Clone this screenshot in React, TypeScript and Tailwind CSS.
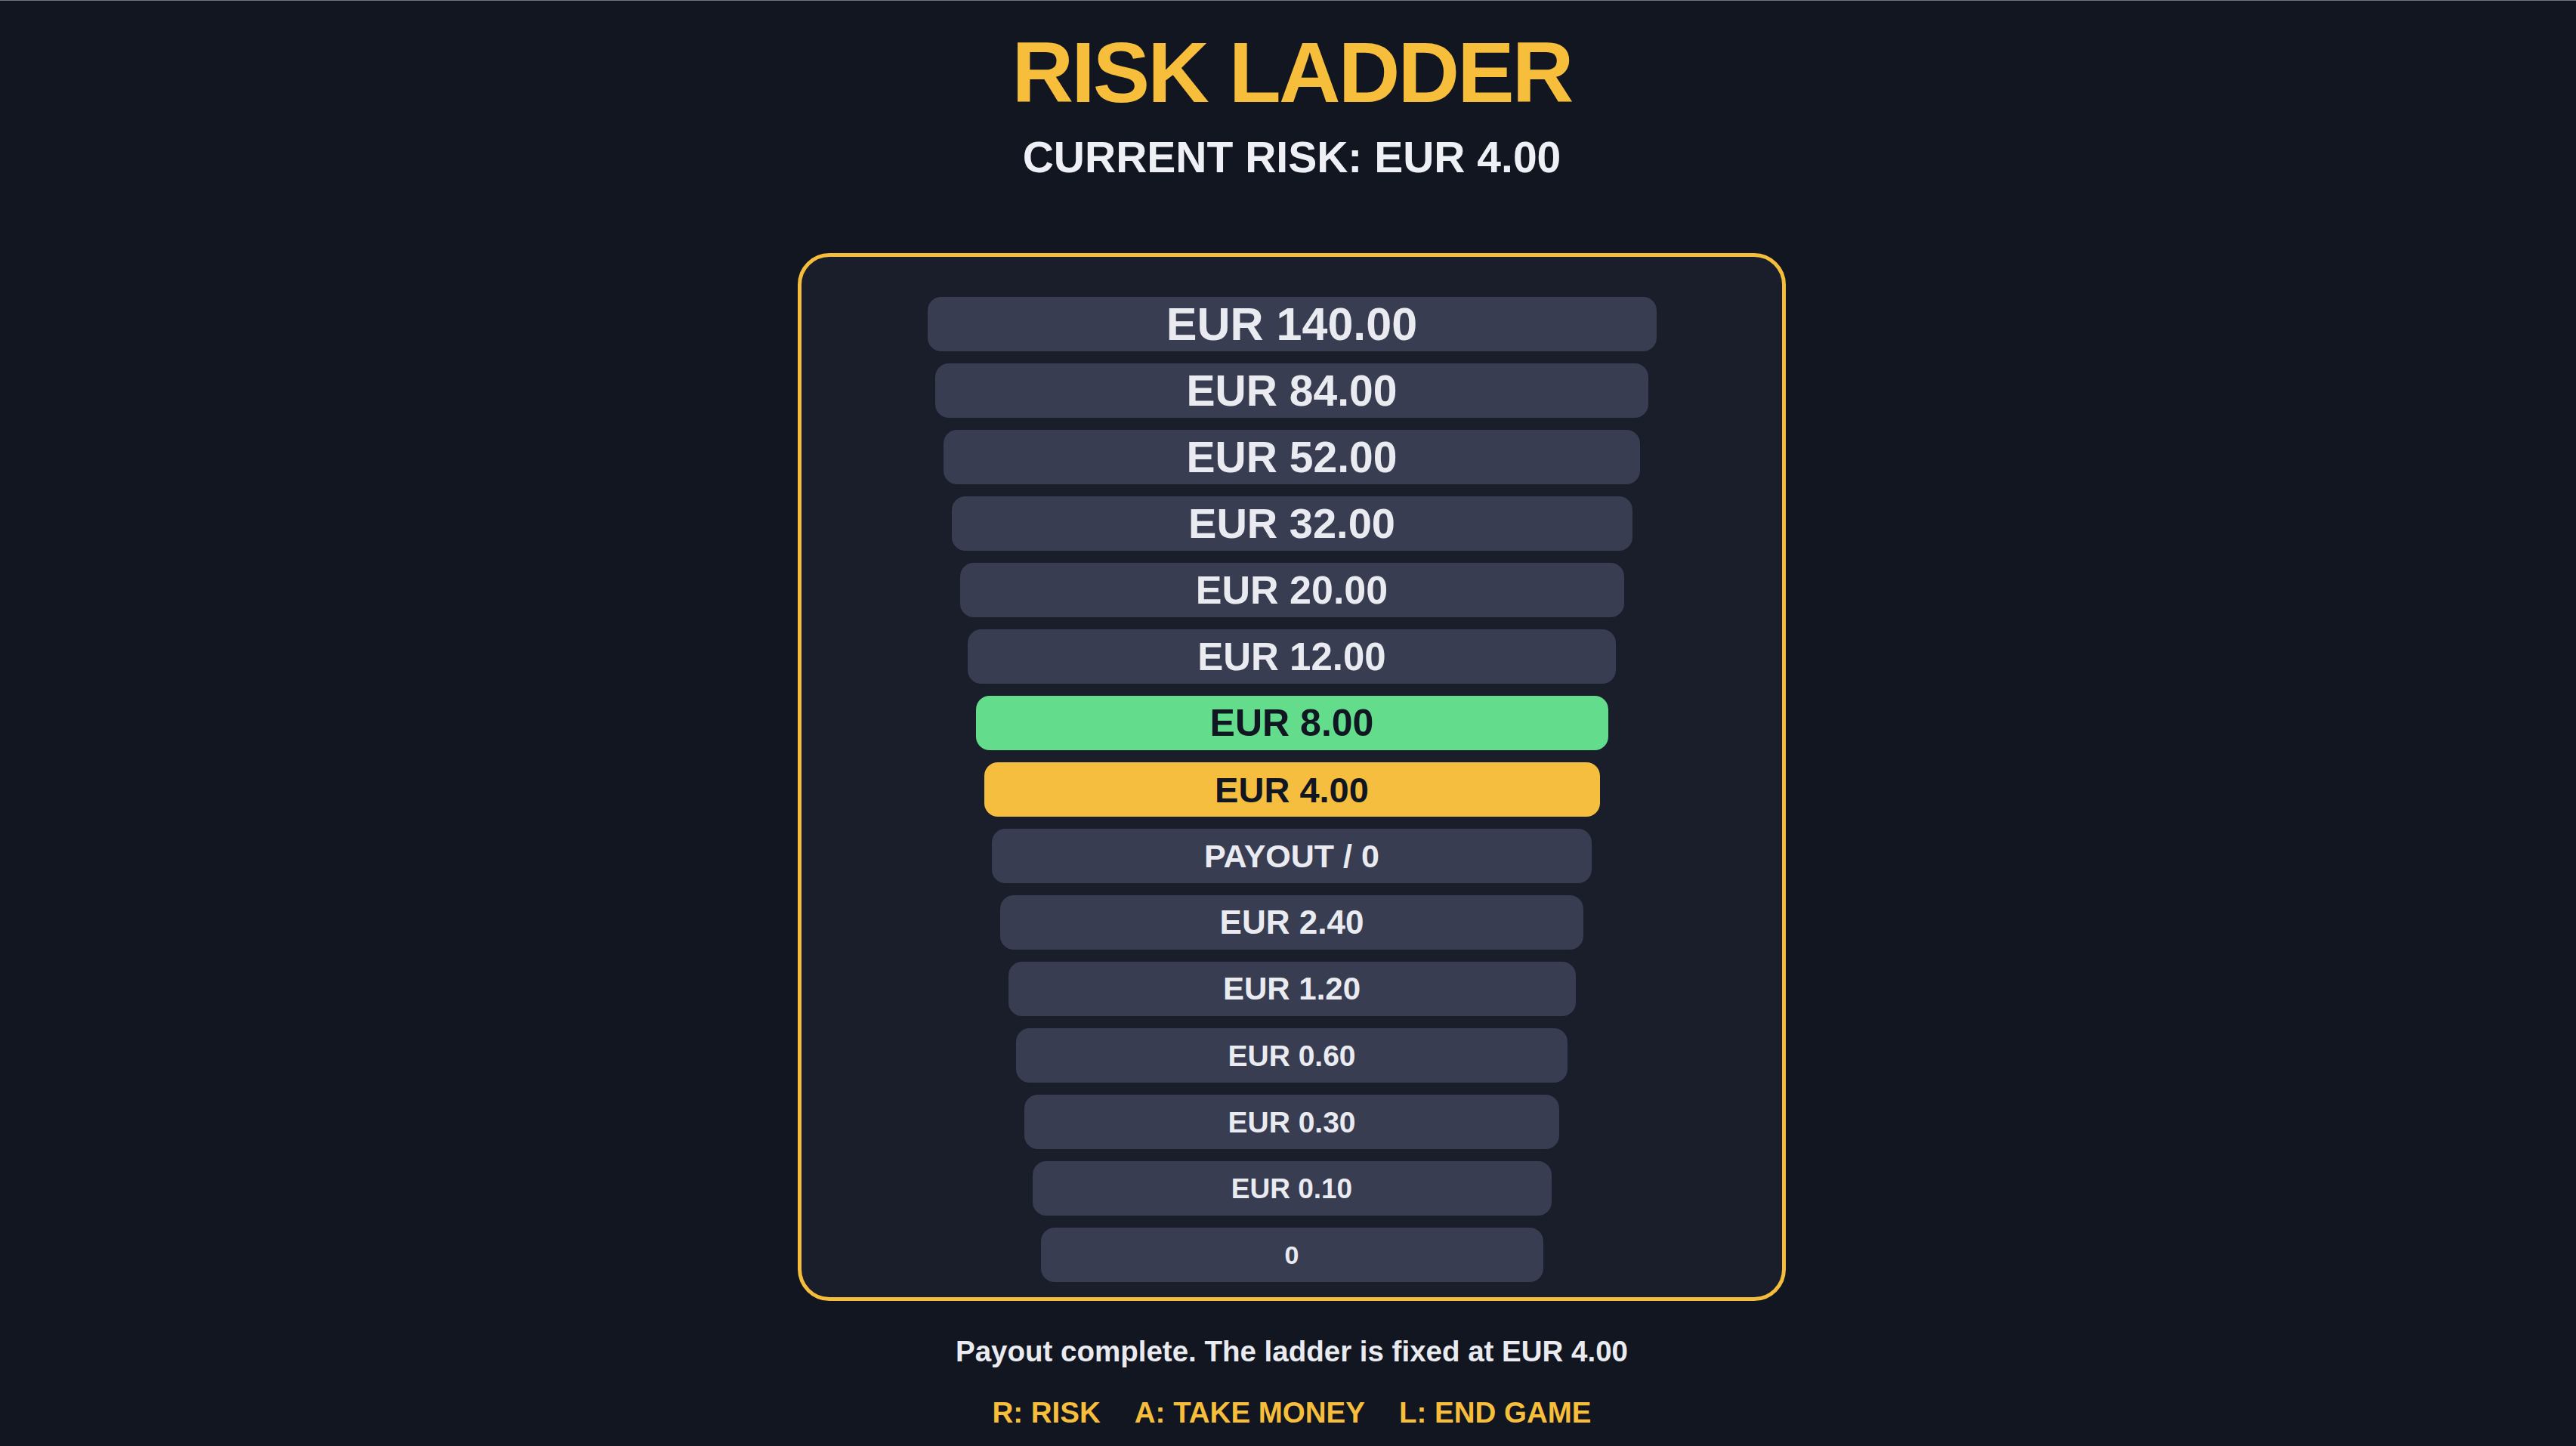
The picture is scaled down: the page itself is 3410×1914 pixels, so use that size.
import React from "react";

type Row = { label: string; w: string; size: string; tone: "plain" | "green" | "yellow" };

const rows: Row[] = [
  { label: "EUR 140.00", w: "w-[965px]", size: "text-[61px]", tone: "plain" },
  { label: "EUR 84.00", w: "w-[944px]", size: "text-[57px]", tone: "plain" },
  { label: "EUR 52.00", w: "w-[922px]", size: "text-[57px]", tone: "plain" },
  { label: "EUR 32.00", w: "w-[901px]", size: "text-[56px]", tone: "plain" },
  { label: "EUR 20.00", w: "w-[879px]", size: "text-[52px]", tone: "plain" },
  { label: "EUR 12.00", w: "w-[858px]", size: "text-[51px]", tone: "plain" },
  { label: "EUR 8.00", w: "w-[837px]", size: "text-[50px]", tone: "green" },
  { label: "EUR 4.00", w: "w-[815px]", size: "text-[47px]", tone: "yellow" },
  { label: "PAYOUT / 0", w: "w-[794px]", size: "text-[43px]", tone: "plain" },
  { label: "EUR 2.40", w: "w-[772px]", size: "text-[44px]", tone: "plain" },
  { label: "EUR 1.20", w: "w-[751px]", size: "text-[42px]", tone: "plain" },
  { label: "EUR 0.60", w: "w-[730px]", size: "text-[39px]", tone: "plain" },
  { label: "EUR 0.30", w: "w-[708px]", size: "text-[39px]", tone: "plain" },
  { label: "EUR 0.10", w: "w-[687px]", size: "text-[37px]", tone: "plain" },
  { label: "0", w: "w-[665px]", size: "text-[34px]", tone: "plain" },
];

const toneClass: Record<Row["tone"], string> = {
  plain: "bg-[#383d51] text-[#e9ebf1]",
  green: "bg-[#63dc8c] text-[#111722]",
  yellow: "bg-[#f5be3e] text-[#111722]",
};

export default function App() {
  return (
    <div
      className="w-full h-[1914px] overflow-hidden bg-[#121620] border-t border-[#70757f] flex flex-col items-center pl-[10px]"
      style={{ fontFamily: '"Liberation Sans", Arial, sans-serif' }}
    >
      <h1 className="mt-[39px] text-[113px] leading-none font-bold tracking-tight text-[#f6be3b]">
        RISK LADDER
      </h1>
      <div className="mt-[27px] text-[57px] leading-none font-bold text-[#eef0f5]">
        CURRENT RISK: EUR 4.00
      </div>

      <div className="mt-[98px] w-[1308px] h-[1387px] border-[5px] border-[#f5bd3b] rounded-[42px] bg-[#191e2a] pt-[53px] pb-[20px] flex flex-col items-center gap-[16px]">
        {rows.map((r) => (
          <div
            key={r.label}
            className={`${r.w} h-[72px] shrink-0 rounded-[18px] flex items-center justify-center font-bold leading-none ${r.size} ${toneClass[r.tone]}`}
          >
            {r.label}
          </div>
        ))}
      </div>

      <div className="mt-[48px] text-[38.5px] leading-none font-bold text-[#e9ebf1]">
        Payout complete. The ladder is fixed at EUR 4.00
      </div>
      <div className="mt-[42px] flex gap-[45px] text-[38.5px] leading-none font-bold text-[#f6be3b]">
        <span>R: RISK</span>
        <span>A: TAKE MONEY</span>
        <span>L: END GAME</span>
      </div>
    </div>
  );
}
